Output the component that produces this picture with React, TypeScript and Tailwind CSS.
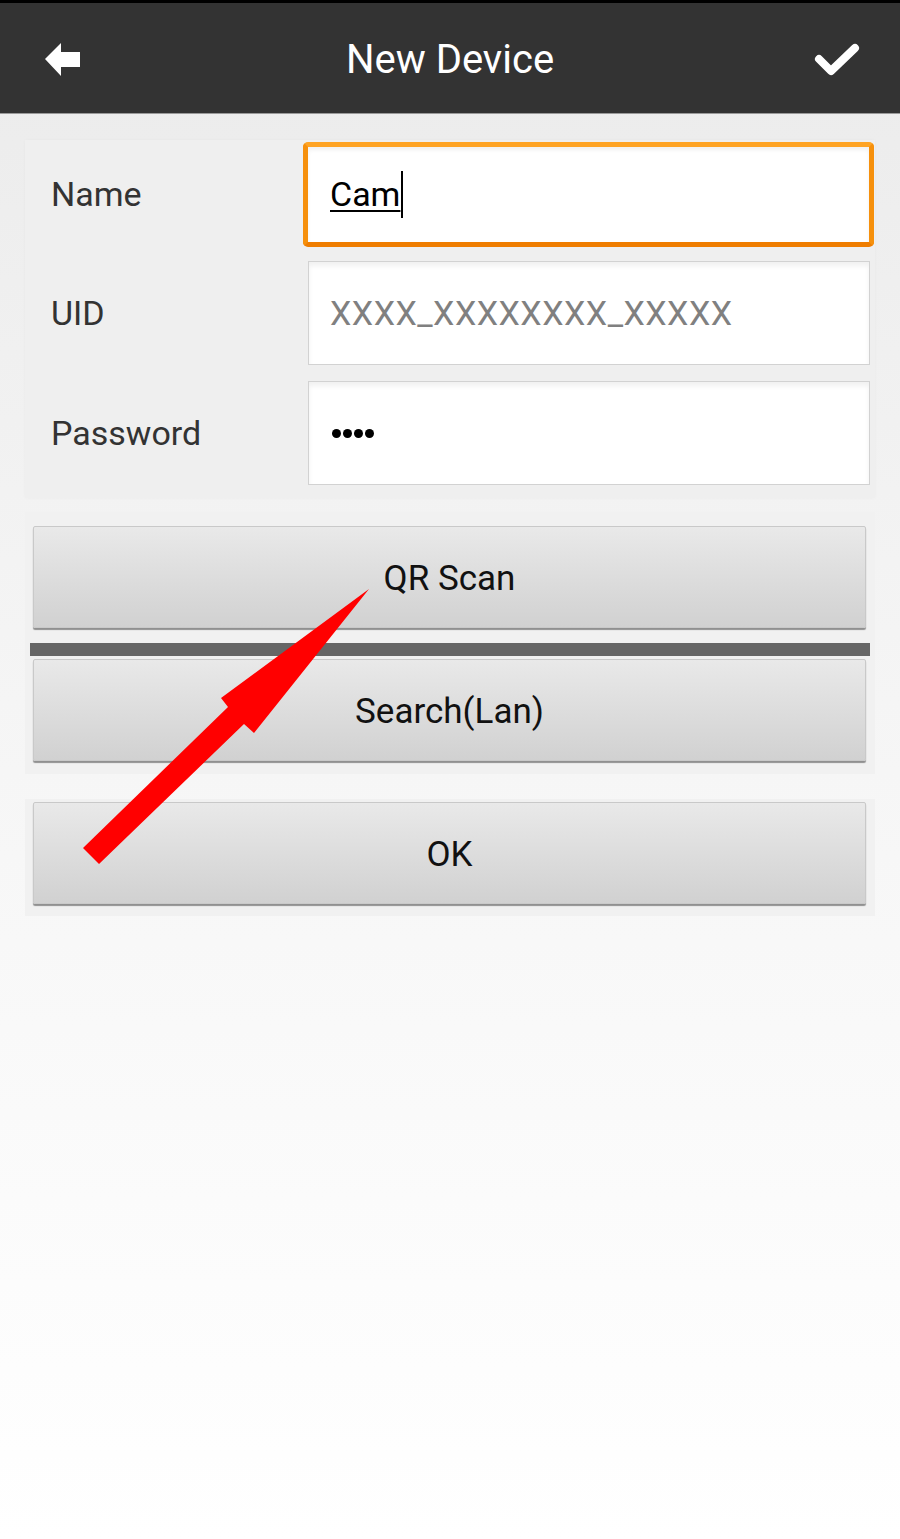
import React from 'react';

function BackIcon() {
  return (
    <svg width="40" height="36" viewBox="0 0 40 36" className="block">
      <path d="M2 17 L18 1 L18 10 L37 10 L37 25 L18 25 L18 34 Z" fill="#fff" />
    </svg>
  );
}

function CheckIcon() {
  return (
    <svg width="54" height="40" viewBox="0 0 54 40" className="block">
      <path d="M10 19 L22 31 L46 8" fill="none" stroke="#fff" strokeWidth="8" strokeLinecap="round" strokeLinejoin="round" />
    </svg>
  );
}

function GrayButton({ label }: { label: string }) {
  return (
    <button className="h-[102px] w-full rounded-[2px] border border-[#c9c9c9] bg-gradient-to-b from-[#e9e9e9] to-[#d1d1d1] pt-[4px] text-[35px] text-[#111] shadow-[0_2px_1px_rgba(0,0,0,0.4)]">
      {label}
    </button>
  );
}

export default function App() {
  return (
    <div
      className="relative min-h-[1539px] w-full bg-gradient-to-b from-[#ebebeb] via-[#f6f6f6] to-white"
      style={{ fontFamily: 'Roboto, "Noto Sans", "Liberation Sans", sans-serif' }}
    >
      {/* top bar */}
      <div className="flex h-[114px] items-center border-t-[3px] border-b border-t-black border-b-[#9a9a9a] bg-[#333333] pt-[4px]">
        <div className="w-[120px] pl-[43px]">
          <BackIcon />
        </div>
        <div className="flex-1 text-center text-[40px] text-white">New Device</div>
        <div className="flex w-[120px] justify-end pr-[37px]">
          <CheckIcon />
        </div>
      </div>

      <div className="px-[25px] pt-[26px]">
        {/* form */}
        <div className="bg-[#efefef] pt-[2px] pb-[13px] shadow-[0_0_3px_rgba(0,0,0,0.03)]">
          <div className="flex h-[105px] items-center">
            <div className="w-[283px] pl-[26px] text-[34px] text-[#333]">Name</div>
            <div className="-ml-[5px] mr-[1px] flex h-[105px] flex-1 items-center rounded-[5px] border-[5px] border-[#f6900c] border-t-[#ffa424] border-b-[#ef7d00] bg-white pl-[22px] shadow-[inset_0_3px_4px_rgba(0,0,0,0.06)]">
              <span className="text-[34px] text-black underline decoration-[2px] underline-offset-[4px]">Cam</span>
              <span className="ml-[1px] h-[47px] w-[2px] bg-black" />
            </div>
          </div>
          <div className="mt-[14px] flex h-[104px] items-center">
            <div className="w-[283px] pl-[26px] text-[34px] text-[#333]">UID</div>
            <div className="mr-[5px] flex h-[104px] flex-1 items-center border border-[#d2d2d2] bg-white pl-[21px] shadow-[inset_0_4px_5px_rgba(0,0,0,0.06)]">
              <span className="text-[34px] tracking-[0.5px] text-[#808080]">XXXX_XXXXXXXX_XXXXX</span>
            </div>
          </div>
          <div className="mt-[16px] flex h-[104px] items-center">
            <div className="w-[283px] pl-[26px] text-[34px] text-[#333]">Password</div>
            <div className="mr-[5px] flex h-[104px] flex-1 items-center gap-[2px] border border-[#d2d2d2] bg-white pl-[23px] shadow-[inset_0_4px_5px_rgba(0,0,0,0.06)]">
              <span className="h-[9px] w-[9px] rounded-full bg-black" />
              <span className="h-[9px] w-[9px] rounded-full bg-black" />
              <span className="h-[9px] w-[9px] rounded-full bg-black" />
              <span className="h-[9px] w-[9px] rounded-full bg-black" />
            </div>
          </div>
        </div>

        {/* scan / search */}
        <div className="mt-[14px] bg-[#f1f1f1] pt-[14px] pb-[13px]">
          <div className="pl-[8px] pr-[9px]">
            <GrayButton label="QR Scan" />
          </div>
          <div className="mx-[5px] mt-[15px] h-[13px] bg-[#666]" />
          <div className="mt-[3px] pl-[8px] pr-[9px]">
            <GrayButton label="Search(Lan)" />
          </div>
        </div>

        {/* ok */}
        <div className="mt-[25px] bg-[#f1f1f1] pt-[3px] pb-[12px] pl-[8px] pr-[9px]">
          <GrayButton label="OK" />
        </div>
      </div>

      {/* red annotation arrow */}
      <svg className="pointer-events-none absolute left-0 top-0" width="900" height="1539">
        <polygon
          points="369,589 254,733 244,724 99,864 83,848 228,707 221,698"
          fill="#ff0000"
        />
      </svg>
    </div>
  );
}
